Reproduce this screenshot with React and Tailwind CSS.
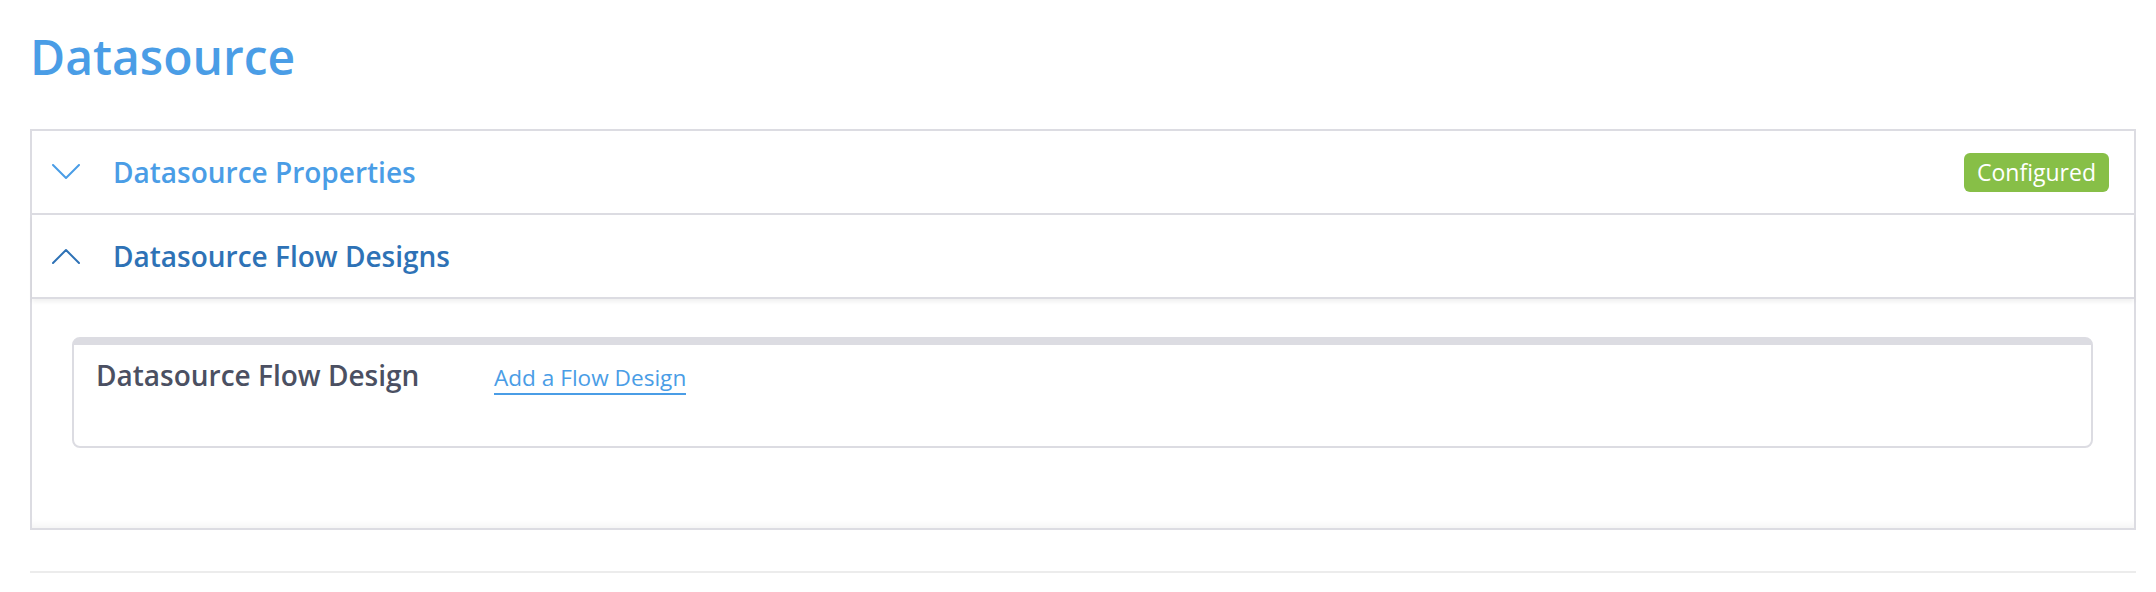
import React, { useState } from "react";

const Chevron = ({ up, className }) => (
  <svg width="28" height="16" viewBox="0 0 28 16" className={className} fill="none">
    <polyline
      points={up ? "1,15 14,2 27,15" : "1,1 14,14 27,1"}
      stroke="currentColor"
      strokeWidth="2"
      strokeLinecap="round"
      strokeLinejoin="round"
    />
  </svg>
);

const PanelHeader = ({ title, open, onToggle, badge, dark, shadow }) => (
  <button
    onClick={onToggle}
    className={`flex items-center w-full h-[84px] pl-[20px] pr-[25px] text-left border-b-2 border-[#dcdce2] bg-white relative ${shadow ? "shadow-[0_3px_4px_rgba(0,0,0,0.06)]" : ""}`}
  >
    <Chevron up={open} className={dark ? "text-[#2e72b6]" : "text-[#4a9de6]"} />
    <span className={`ml-[33px] text-[28px] leading-[38px] font-semibold ${dark ? "text-[#2e72b6]" : "text-[#4a9de6]"}`}>
      {title}
    </span>
    {badge && (
      <span className="ml-auto h-[39px] px-[13px] flex items-center rounded-[6px] bg-[#87bf47] text-white text-[23px] leading-[30px]">
        {badge}
      </span>
    )}
  </button>
);

export default function App() {
  // second panel open by default, like in the screen
  const [open, setOpen] = useState({ props: false, flows: true });
  const toggle = (key) => setOpen((prev) => ({ ...prev, [key]: !prev[key] }));

  return (
    <div className="min-h-[592px] bg-white pl-[30px] pr-[20px] font-['Open_Sans',sans-serif]">
      <h1 className="pt-[29px] text-[48px] leading-[56px] font-semibold text-[#4a9de6]">Datasource</h1>

      <div className="mt-[44px] border-2 border-[#dcdce2] shadow-[inset_0_-8px_8px_-6px_rgba(0,0,0,0.06)]">
        <PanelHeader
          title="Datasource Properties"
          open={open.props}
          onToggle={() => toggle("props")}
          badge="Configured"
        />
        <PanelHeader
          title="Datasource Flow Designs"
          open={open.flows}
          onToggle={() => toggle("flows")}
          dark
          shadow
        />
        {open.flows && (
          <div className="pt-[38px] pb-[80px] pl-[40px] pr-[41px]">
            <div className="h-[111px] rounded-[8px] border-2 border-t-[8px] border-[#dcdce2] pl-[22px] pt-[11px]">
              <div className="flex items-baseline">
                <span className="w-[398px] text-[28px] leading-[38px] font-semibold text-[#4b5062]">
                  Datasource Flow Design
                </span>
                <a href="#" className="text-[22.6px] leading-[30px] text-[#4a9de6] border-b-2 border-[#4a9de6]">
                  Add a Flow Design
                </a>
              </div>
            </div>
          </div>
        )}
      </div>

      <div className="mt-[41px] h-[2px] bg-[#ececec]" />
    </div>
  );
}
